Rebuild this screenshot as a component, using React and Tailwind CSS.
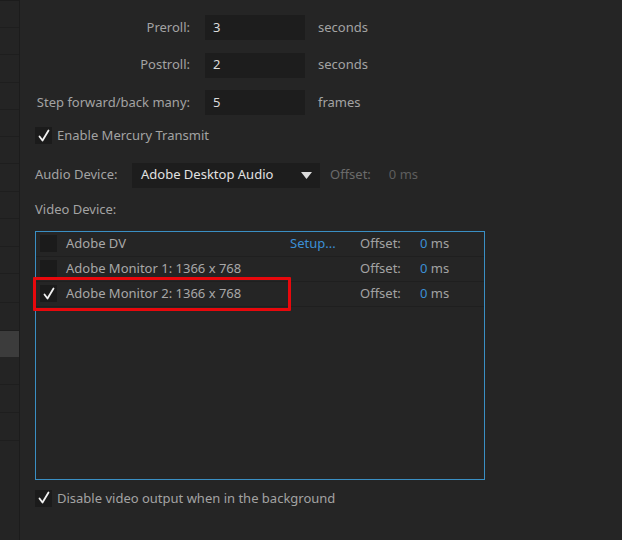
import React from 'react';

const font = { fontFamily: '"Noto Sans", "Open Sans", sans-serif' };

function Check({ checked }) {
  return (
    <div className="w-[17px] h-[17px] bg-[#1b1b1b] flex items-center justify-center shrink-0">
      {checked && (
        <svg width="14" height="14" viewBox="0 0 14 14">
          <path d="M2.5 7.5 L5.5 11.5 L11.5 1.5" fill="none" stroke="#f2f2f2" strokeWidth="1.8" strokeLinecap="round" strokeLinejoin="round" />
        </svg>
      )}
    </div>
  );
}

function NumRow({ label, value, unit }) {
  return (
    <div className="flex items-center h-[25px]">
      <div className="w-[155px] text-right text-[#a3a3a3]">{label}</div>
      <div className="ml-[15px] w-[100px] h-[25px] bg-[#1d1d1d] flex items-center pl-[8px] text-[#dcdcdc]">{value}</div>
      <div className="ml-[13px] text-[#a3a3a3]">{unit}</div>
    </div>
  );
}

function DeviceRow({ checked, name, setup }) {
  return (
    <div className="flex items-center h-[25px] border-b border-[#1f1f1f] pl-[4px]">
      <Check checked={checked} />
      <div className="ml-[9px] w-[224px] text-[#a8a8a8]">{name}</div>
      <div className="w-[70px] text-[#3b8fd6]">{setup ? 'Setup...' : ''}</div>
      <div className="w-[60px] text-[#a3a3a3]">Offset:</div>
      <div className="text-[#3b8fd6]">0 <span className="text-[#a3a3a3]">ms</span></div>
    </div>
  );
}

const sideRows = [27, 27, 28, 27, 27, 27, 28, 27, 28, 27, 29, 28, 26, 28, 28, 28];

export default function App() {
  return (
    <div className="w-[622px] h-[540px] flex bg-[#252525] text-[13px] overflow-hidden" style={font}>
      {/* left list strip */}
      <div className="w-[20px] shrink-0 bg-[#242424] border-r border-[#1c1c1c] flex flex-col">
        <div className="h-[1px] bg-[#1c1c1c]" />
        {sideRows.map((h, i) => (
          <div
            key={i}
            className={i === 12 ? 'bg-[#3c3c3c]' : 'border-b border-[#1e1e1e]'}
            style={{ height: h }}
          />
        ))}
      </div>

      {/* main settings panel */}
      <div className="flex-1 pl-[15px] pt-[15px] flex flex-col">
        <div className="flex flex-col gap-[12.5px]">
          <NumRow label="Preroll:" value="3" unit="seconds" />
          <NumRow label="Postroll:" value="2" unit="seconds" />
          <NumRow label="Step forward/back many:" value="5" unit="frames" />
        </div>

        <div className="flex items-center mt-[11px]">
          <Check checked />
          <span className="ml-[5px] text-[#a3a3a3]">Enable Mercury Transmit</span>
        </div>

        <div className="flex items-center mt-[17px]">
          <span className="w-[97px] text-[#a3a3a3]">Audio Device:</span>
          <div className="w-[188px] h-[25px] bg-[#1d1d1d] flex items-center pl-[9px] pr-[8px] text-[#e2e2e2]">
            <span className="flex-1">Adobe Desktop Audio</span>
            <svg width="11" height="7" viewBox="0 0 11 7">
              <path d="M0 0 H11 L5.5 7 Z" fill="#dcdcdc" />
            </svg>
          </div>
          <span className="ml-[10px] text-[#6b6b6b]">Offset:</span>
          <span className="ml-[18px] text-[#5e5e5e]">0 ms</span>
        </div>

        <div className="mt-[10px] h-[25px] flex items-center text-[#a3a3a3]">Video Device:</div>

        <div className="mt-[8px] w-[450px] h-[249px] border border-[#3a8fc4] relative">
          <DeviceRow name="Adobe DV" setup />
          <DeviceRow name="Adobe Monitor 1: 1366 x 768" />
          <DeviceRow checked name="Adobe Monitor 2: 1366 x 768" />
          <div className="absolute left-[-3px] top-[45px] w-[258px] h-[34px] border-[3px] border-[#e8080c] rounded-[1px]" />
        </div>

        <div className="flex items-center mt-[9px]">
          <Check checked />
          <span className="ml-[5px] text-[#a3a3a3]">Disable video output when in the background</span>
        </div>
      </div>
    </div>
  );
}
